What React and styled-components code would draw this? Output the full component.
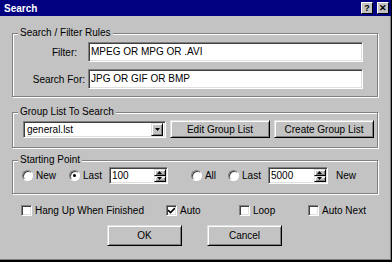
import React from "react";
import styled, { createGlobalStyle } from "styled-components";

const GlobalStyle = createGlobalStyle`
  html, body {
    margin: 0;
    padding: 0;
    background: #c3c3c3;
  }
  body {
    font-family: "Liberation Sans", Arial, sans-serif;
    font-size: 10px;
    color: #000;
  }
`;

const Dialog = styled.div`
  width: 392px;
  height: 262px;
  box-sizing: border-box;
  background: #c3c3c3;
  border-right: 1px solid #000;
  border-bottom: 2px solid #000;
  box-shadow: inset -1px -1px 0 #808080;
  display: flex;
  flex-direction: column;
`;

const TitleBar = styled.div`
  height: 16px;
  background: #000080;
  display: flex;
  align-items: center;
  padding: 0 2px 0 4px;
`;

const Title = styled.span`
  color: #fff;
  font-weight: bold;
  font-size: 10px;
`;

const TitleButtons = styled.div`
  margin-left: auto;
  display: flex;
  gap: 4px;
`;

const TitleButton = styled.div`
  width: 10px;
  height: 10px;
  background: #c3c3c3;
  border: 1px solid;
  border-color: #fff #000 #000 #fff;
  display: flex;
  align-items: center;
  justify-content: center;
  font-weight: bold;
  font-size: 9px;
  line-height: 10px;
`;

const Body = styled.div`
  flex: 1;
  display: flex;
  flex-direction: column;
  padding: 0 13px 0 12px;
`;

const Frame = styled.div`
  position: relative;
  margin-top: ${p => p.$top}px;
  border: 1px solid #808080;
  box-shadow: inset 1px 1px 0 #fff, 1px 1px 0 #fff;
  padding: ${p => p.$pad};
  display: flex;
  flex-direction: ${p => (p.$column ? "column" : "row")};
  align-items: ${p => (p.$column ? "stretch" : "center")};
  gap: ${p => p.$gap || 0}px;
`;

const Caption = styled.span`
  position: absolute;
  top: -7px;
  left: 5px;
  padding: 0 2px;
  line-height: 12px;
  background: #c3c3c3;
`;

const FieldRow = styled.div`
  display: flex;
  align-items: center;
`;

const Label = styled.span`
  width: 62px;
  box-sizing: border-box;
  text-align: right;
  padding-right: ${p => p.$indent || 0}px;
  margin-right: 3px;
`;

const Sunken = styled.div`
  box-sizing: border-box;
  background: #fff;
  border: 1px solid;
  border-color: #808080 #fff #fff #808080;
  box-shadow: inset 1px 1px 0 #404040, inset -1px -1px 0 #dfdfdf;
`;

const TextField = styled(Sunken)`
  flex: 1;
  height: 20px;
  padding: 0 2px 2px;
  display: flex;
  align-items: center;
`;

const Combo = styled(Sunken)`
  width: 143px;
  height: 17px;
  display: flex;
  align-items: center;
  padding: 2px;
`;

const ComboText = styled.span`
  flex: 1;
  padding-left: 1px;
`;

const Raised = styled.div`
  box-sizing: border-box;
  background: #c3c3c3;
  border: 1px solid;
  border-color: #dfdfdf #000 #000 #dfdfdf;
  box-shadow: inset 1px 1px 0 #fff, inset -1px -1px 0 #808080;
  display: flex;
  align-items: center;
  justify-content: center;
`;

const DropButton = styled(Raised)`
  width: 12px;
  height: 13px;
`;

const Button = styled(Raised)`
  width: ${p => p.$w}px;
  height: ${p => p.$h}px;
  margin-left: ${p => p.$ml || 0}px;
`;

const Spin = styled(Sunken)`
  width: ${p => p.$w}px;
  height: 17px;
  margin-left: ${p => p.$ml || 0}px;
  display: flex;
  align-items: stretch;
  padding: 1px 1px 1px 2px;
`;

const SpinText = styled.span`
  flex: 1;
  line-height: 13px;
`;

const SpinButtons = styled.div`
  width: 12px;
  display: flex;
  flex-direction: column;
`;

const SpinButton = styled(Raised)`
  flex: 1;
`;

const Option = styled.label`
  display: flex;
  align-items: center;
  gap: 3px;
  margin-left: ${p => p.$ml || 0}px;
`;

const RadioDot = styled.span`
  position: relative;
  width: 11px;
  height: 11px;
  box-sizing: border-box;
  border-radius: 50%;
  background: #fff;
  border: 1px solid;
  border-color: #808080 #fff #fff #808080;
  box-shadow: inset 1px 1px 0 #404040;
  &::after {
    content: "";
    display: ${p => (p.$on ? "block" : "none")};
    position: absolute;
    left: 3px;
    top: 3px;
    width: 3px;
    height: 3px;
    border-radius: 50%;
    background: #000;
  }
`;

const CheckBox = styled(Sunken)`
  width: 11px;
  height: 11px;
  display: flex;
  align-items: center;
  justify-content: center;
`;

const Plain = styled.span`
  margin-left: ${p => p.$ml || 0}px;
`;

const CheckRow = styled.div`
  margin-top: 9px;
  height: 14px;
  padding-left: 9px;
  display: grid;
  grid-template-columns: 145px 73px 69px auto;
  align-items: center;
`;

const ButtonRow = styled.div`
  margin-top: 8px;
  display: flex;
  justify-content: center;
  gap: 25px;
  padding-right: 1px;
`;

const Arrow = ({ up }) => (
  <svg width="5" height="3" viewBox="0 0 5 3">
    <path d={up ? "M2.5 0 L5 3 L0 3 Z" : "M0 0 L5 0 L2.5 3 Z"} fill="#000" />
  </svg>
);

const Radio = ({ on, children, ml }) => (
  <Option $ml={ml}>
    <RadioDot $on={on} />
    {children}
  </Option>
);

const Check = ({ on, children }) => (
  <Option>
    <CheckBox>
      {on && (
        <svg width="7" height="7" viewBox="0 0 7 7">
          <path d="M0 3 L2.5 5.5 L7 1" stroke="#000" strokeWidth="1.6" fill="none" />
        </svg>
      )}
    </CheckBox>
    {children}
  </Option>
);

const Spinner = ({ value, w, ml }) => (
  <Spin $w={w} $ml={ml}>
    <SpinText>{value}</SpinText>
    <SpinButtons>
      <SpinButton><Arrow up /></SpinButton>
      <SpinButton><Arrow /></SpinButton>
    </SpinButtons>
  </Spin>
);

export default function App() {
  return (
    <>
      <GlobalStyle />
      <Dialog>
        <TitleBar>
          <Title>Search</Title>
          <TitleButtons>
            <TitleButton>?</TitleButton>
            <TitleButton>✕</TitleButton>
          </TitleButtons>
        </TitleBar>
        <Body>
          <Frame $top={17} $pad="8px 14px 7px 10px" $column $gap={7}>
            <Caption>Search / Filter Rules</Caption>
            <FieldRow>
              <Label $indent={8}>Filter:</Label>
              <TextField>MPEG OR MPG OR .AVI</TextField>
            </FieldRow>
            <FieldRow>
              <Label>Search For:</Label>
              <TextField>JPG OR GIF OR BMP</TextField>
            </FieldRow>
          </Frame>

          <Frame $top={15} $pad="7px 3px 9px 10px" $gap={4}>
            <Caption>Group List To Search</Caption>
            <Combo>
              <ComboText>general.lst</ComboText>
              <DropButton><Arrow /></DropButton>
            </Combo>
            <Button $w={100} $h={18}>Edit Group List</Button>
            <Button $w={100} $h={18}>Create Group List</Button>
          </Frame>

          <Frame $top={12} $pad="6px 3px 9px 9px">
            <Caption>Starting Point</Caption>
            <Radio>New</Radio>
            <Radio on ml={13}>Last</Radio>
            <Spinner value="100" w={59} ml={7} />
            <Radio ml={23}>All</Radio>
            <Radio ml={12}>Last</Radio>
            <Spinner value="5000" w={60} ml={7} />
            <Plain $ml={8}>New</Plain>
          </Frame>

          <CheckRow>
            <Check>Hang Up When Finished</Check>
            <Check on>Auto</Check>
            <Check>Loop</Check>
            <Check>Auto Next</Check>
          </CheckRow>

          <ButtonRow>
            <Button $w={75} $h={21}>OK</Button>
            <Button $w={75} $h={21}>Cancel</Button>
          </ButtonRow>
        </Body>
      </Dialog>
    </>
  );
}
